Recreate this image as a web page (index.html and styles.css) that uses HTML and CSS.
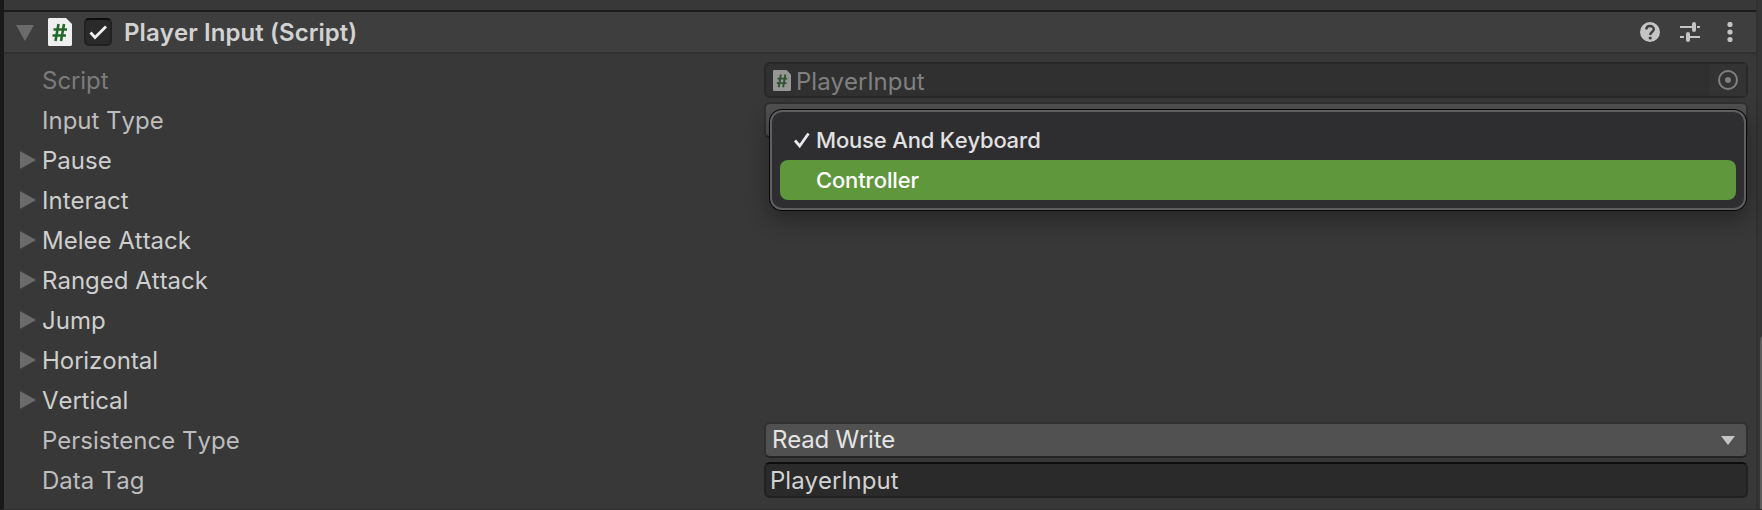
FILE: index.html
```html
<!DOCTYPE html>
<html lang="en">
<head>
<meta charset="utf-8">
<title>Player Input</title>
<link rel="stylesheet" href="styles.css">
</head>
<body>
<div class="inspector">
  <main class="panel">
    <header class="header">
      <svg class="fold-open" width="18" height="16" viewBox="0 0 18 16"><path d="M0 0h18L9 16z"/></svg>
      <svg class="script-icon" width="24" height="28" viewBox="0 0 24 28"><path class="sheet" d="M1 0h17l6 6v21l-1 1H1l-1-1V1z"/><path class="hash" d="M10.500 6l-3 17M16 6l-3 17M5.500 11.500h13.500M4.500 17.500h13.500"/></svg>
      <span class="checkbox"><svg width="24" height="24" viewBox="0 0 24 24"><path d="M4.500 12.500l4.500 5L20 6.500"/></svg></span>
      <h1 class="title">Player Input (Script)</h1>
      <div class="tools">
        <svg width="20" height="20" viewBox="0 0 20 20"><circle class="solid" cx="10" cy="10" r="10"/><path class="question" d="M6.300 7.500C6.300 2.900 13.800 2.900 13.800 7.300C13.800 10 10.200 10 10.200 13"/><circle class="question-dot" cx="10.200" cy="16" r="1.600"/></svg>
        <svg width="20" height="20" viewBox="0 0 20 20"><path class="slider" d="M0 5h14M17 5h3M0 15h4M8 15h12"/><path class="slider-knob" d="M14 2v6M8 12v6"/></svg>
        <svg width="20" height="20" viewBox="0 0 20 20"><circle class="solid" cx="10" cy="2.500" r="2.600"/><circle class="solid" cx="10" cy="10" r="2.600"/><circle class="solid" cx="10" cy="17.500" r="2.600"/></svg>
      </div>
    </header>
    <div class="rows">
      <div class="row dim"><span class="label">Script</span>
        <div class="field object"><svg class="mini-icon" width="18" height="21" viewBox="0 0 24 28"><path class="sheet" d="M1 0h17l6 6v21l-1 1H1l-1-1V1z"/><path class="hash" d="M10.500 6l-3 17M16.500 6l-3 17M6 11.500h13M5 17.500h13"/></svg><span class="value">PlayerInput</span>
          <span class="picker"><svg width="20" height="20" viewBox="0 0 20 20"><circle class="ring" cx="10" cy="10" r="9"/><circle class="core" cx="10" cy="10" r="3"/></svg></span></div></div>
      <div class="row"><span class="label">Input Type</span>
        <div class="field select">
          <div class="menu">
            <div class="option"><svg class="tick" width="18" height="18" viewBox="0 0 18 18"><path d="M2 9.500l4.700 5.500L15.500 2.500"/></svg>Mouse And Keyboard</div>
            <div class="option active">Controller</div>
          </div>
        </div></div>
      <div class="row foldout"><svg class="fold" width="16" height="18" viewBox="0 0 16 18"><path d="M0 0l16 9L0 18z"/></svg><span class="label">Pause</span></div>
      <div class="row foldout"><svg class="fold" width="16" height="18" viewBox="0 0 16 18"><path d="M0 0l16 9L0 18z"/></svg><span class="label">Interact</span></div>
      <div class="row foldout"><svg class="fold" width="16" height="18" viewBox="0 0 16 18"><path d="M0 0l16 9L0 18z"/></svg><span class="label">Melee Attack</span></div>
      <div class="row foldout"><svg class="fold" width="16" height="18" viewBox="0 0 16 18"><path d="M0 0l16 9L0 18z"/></svg><span class="label">Ranged Attack</span></div>
      <div class="row foldout"><svg class="fold" width="16" height="18" viewBox="0 0 16 18"><path d="M0 0l16 9L0 18z"/></svg><span class="label">Jump</span></div>
      <div class="row foldout"><svg class="fold" width="16" height="18" viewBox="0 0 16 18"><path d="M0 0l16 9L0 18z"/></svg><span class="label">Horizontal</span></div>
      <div class="row foldout"><svg class="fold" width="16" height="18" viewBox="0 0 16 18"><path d="M0 0l16 9L0 18z"/></svg><span class="label">Vertical</span></div>
      <div class="row"><span class="label">Persistence Type</span>
        <div class="field select"><span class="value">Read Write</span><svg class="arrow" width="14" height="9" viewBox="0 0 14 9"><path d="M0 0h14L7 9z"/></svg></div></div>
      <div class="row"><span class="label">Data Tag</span>
        <div class="field input"><span class="value">PlayerInput</span></div></div>
    </div>
  </main>
  <aside class="scrollbar"><div class="thumb"></div></aside>
</div>
</body>
</html>
```
FILE: styles.css
```css
* { box-sizing: border-box; }
body { margin: 0; background: #383838; color: #c8c8c8; font: 24px/40px Inter, sans-serif; font-kerning: none; letter-spacing: 0; }
svg { display: block; flex: none; }
.inspector { display: flex; width: 1762px; height: 510px; overflow: hidden; border-left: 4px solid #191919; border-bottom: 1px solid #2e2e2e; }
.panel { width: 1752px; flex: none; padding-top: 10px; }
.header { display: flex; align-items: center; height: 44px; padding: 0 16px 0 12px; background: #3e3e3e; border-top: 2px solid #1a1a1a; border-bottom: 2px solid #303030; }
.fold-open, .fold { fill: #6b6b6b; }
.fold-open { margin-top: 1px; }
.script-icon { margin-left: 14px; }
.sheet { fill: #efefef; }
.hash { fill: none; stroke: #23682a; stroke-width: 2.6; }
.checkbox { display: flex; align-items: center; justify-content: center; width: 28px; height: 28px; margin-left: 12px; background: #2a2a2a; border: 2px solid #212121; border-top-color: #0d0d0d; border-radius: 5px; }
.checkbox path { fill: none; stroke: #f0f0f0; stroke-width: 2.8; }
.title { margin: 0 0 0 12px; padding-top: 2px; font-size: 24px; font-weight: 600; line-height: 38px; color: #d2d2d2; letter-spacing: 0.08px; }
.tools { display: flex; gap: 20px; margin-left: auto; }
.solid { fill: #c4c4c4; }
.question { fill: none; stroke: #3e3e3e; stroke-width: 2.4; }
.question-dot { fill: #3e3e3e; }
.slider { stroke: #c4c4c4; stroke-width: 2; }
.slider-knob { stroke: #c4c4c4; stroke-width: 4; stroke-linecap: round; }
.rows { padding-top: 6px; }
.row { display: flex; align-items: center; height: 40px; padding: 0 8px 0 38px; }
.row .label { width: 722px; flex: none; color: #bdbdbd; padding-top: 1px; }
.foldout { padding-left: 16px; gap: 6px; }
.foldout .label { color: #cecece; }
.field { position: relative; display: flex; align-items: center; flex: 1; height: 36px; border: 2px solid #303030; border-radius: 6px; }
.select { background: #515151; border-bottom-color: #242424; padding: 0 11px 0 6px; color: #e4e4e4; letter-spacing: -0.15px; }
.arrow { margin-left: auto; fill: #c4c4c4; }
.input { background: #2a2a2a; border-color: #212121; border-top-color: #0d0d0d; padding: 2px 0 0 4px; color: #d2d2d2; }
.dim .label { color: #7b7b7b; }
.object { background: #303030; border-color: #282828; padding-left: 7px; color: #808080; }
.object .value { margin-left: 5px; padding-top: 3px; }
.mini-icon .sheet { fill: #969696; }
.mini-icon .hash { stroke: #305433; }
.picker { display: flex; align-items: center; justify-content: center; width: 36px; height: 32px; margin-left: auto; background: #333; }
.ring { fill: none; stroke: #808080; stroke-width: 2; }
.core { fill: #808080; }
.menu { position: absolute; z-index: 2; left: 4px; top: 6px; width: 976px; height: 100px; padding: 8px; background: #2e2e30; border: 2px solid #5f5f61; border-radius: 12px; box-shadow: 0 0 0 1px #090909, 0 8px 22px 2px rgba(0, 0, 0, 0.32); font-size: 22px; font-weight: 500; letter-spacing: -0.17px; color: #e1e1e2; }
.option { display: flex; height: 40px; padding-left: 36px; border-radius: 8px; }
.option.active { background: #5f973d; color: #fff; }
.tick { margin: 11px 5px 0 -23px; }
.tick path { fill: none; stroke: #e8e8e8; stroke-width: 2.8; }
.scrollbar { flex: 1; padding-top: 333px; background: #353535; border-left: 2px solid #303030; }
.thumb { width: 16px; height: 300px; margin-left: 2px; background: #5c5c5c; border-radius: 8px; }
```
